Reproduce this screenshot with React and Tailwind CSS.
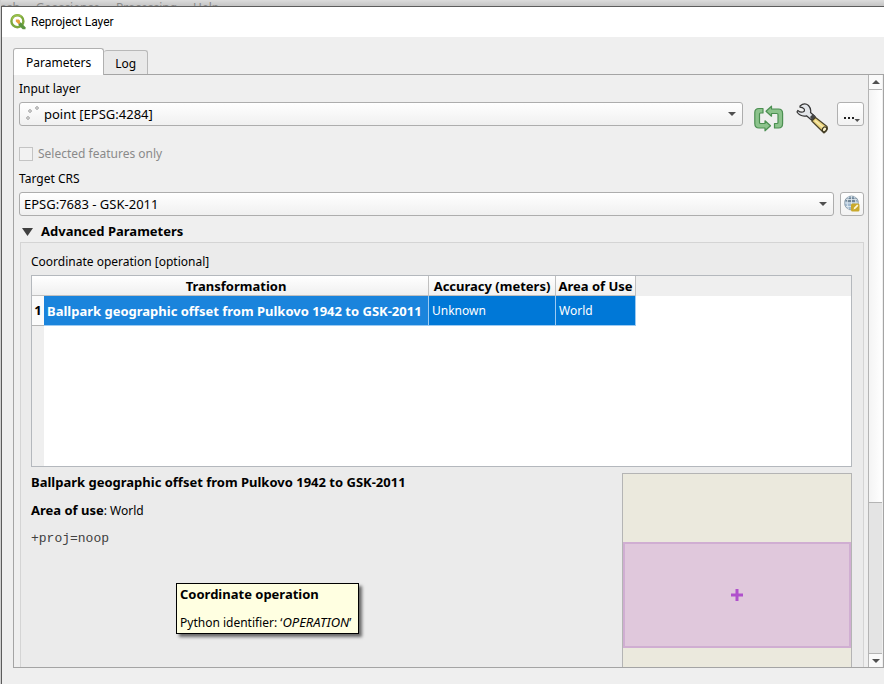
import clsx from 'clsx';

const MENUS = ['Mesh', 'Geoscience', 'Processing', 'Help'];

const LAYERS = ['point [EPSG:4284]'];
const CRS_LIST = ['EPSG:7683 - GSK-2011'];

const OPERATION = {
  name: 'Ballpark geographic offset from Pulkovo 1942 to GSK-2011',
  accuracy: 'Unknown',
  area: 'World',
  proj: '+proj=noop',
};

const QgisLogo = () => (
  <svg width="16" height="16" viewBox="0 0 16 16" aria-hidden="true">
    <circle cx="7.4" cy="7.2" r="6" fill="none" stroke="#7da83c" strokeWidth="2.4" />
    <path d="M2 5.500A5.800 5.800 0 0 1 11.500 2.600" fill="none" stroke="#9cc14a" strokeWidth="1.4" />
    <path d="M8.500 8.200l2.400.2 4.600 4.800v2.100h-2.800L8.500 11z" fill="#5b9440" />
    <path d="M5.800 5.600h3l1.200 1.200v2.600l-1.600.6-2.600-2.400z" fill="#e8a13e" />
  </svg>
);

const PointsIcon = () => (
  <svg width="16" height="16" viewBox="0 0 16 16" aria-hidden="true">
    <g fill="#fff" stroke="#8c8c8c" strokeWidth="0.9">
      <circle cx="5" cy="5" r="1.3" />
      <circle cx="12" cy="2" r="1.3" />
      <circle cx="3" cy="12" r="1.3" />
    </g>
  </svg>
);

const IterateIcon = () => (
  <svg width="30" height="28" viewBox="0 0 30 28" aria-hidden="true">
    <g fill="#8cc38c" stroke="#4b8f51" strokeWidth="1.2" strokeLinejoin="round">
      <path d="M9 3.500H5Q.8 3.500.8 7.500V18.500Q.8 23 5 23H11V25.800L16.500 20.800L11 15.800V18.500H6.500Q5.500 18.500 5.500 17.500V9Q5.500 8 6.500 8H9Z" />
      <path d="M20.500 23H24.500Q28.600 23 28.600 18.500V8.500Q28.600 4 24.500 4H17.500V1.200L12 6.200L17.500 11.200V8.500H23Q24 8.500 24 9.500V17.500Q24 18.500 23 18.500H20.500Z" />
    </g>
  </svg>
);

const WrenchIcon = () => (
  <svg width="34" height="32" viewBox="0 0 34 32" aria-hidden="true">
    <path
      d="M4 3Q8.500-.8 12.500 2.500Q15.500 6 14.500 9.500L19 13.500L15.500 17L10.500 12.800Q4.500 14 1 9L1.800 7.500Q5.500 10.500 8.200 8.200Q9.500 5 4 4.200Z"
      fill="#e3e6ea"
      stroke="#343434"
      strokeWidth="1.2"
      strokeLinejoin="round"
    />
    <path d="M14 14l3-3 3 3-3.500 3.500z" fill="#454545" />
    <path d="M19.500 14.500L31 23.500Q32.500 27 28 30L15.800 18Z" fill="#ecd57e" stroke="#4a432a" strokeWidth="1.2" strokeLinejoin="round" />
    <path d="M19 17.500l9.500 8" stroke="#f8ebb0" strokeWidth="1.5" />
    <ellipse cx="28.500" cy="26.300" rx="2" ry="2.600" transform="rotate(35 28.500 26.300)" fill="#fff6cc" stroke="#3b3620" strokeWidth="1.2" />
  </svg>
);

const GlobeIcon = () => (
  <svg width="18" height="18" viewBox="0 0 18 18" aria-hidden="true">
    <circle cx="8.500" cy="8" r="7" fill="#9fb8cf" stroke="#8d9aa5" strokeWidth="0.8" />
    <path d="M2 5Q8 0 14.500 4L12 7H4z" fill="#6f8496" />
    <path
      d="M1.500 8h14M3 4.500h11M3 11.500h11M8.500 1v14M5.500 1.500Q2.500 8 5.500 14.500M11.500 1.500Q14.500 8 11.500 14.500"
      fill="none"
      stroke="#e4edf4"
      strokeWidth="0.8"
    />
    <rect x="8" y="8.500" width="8.500" height="8" rx="1.500" fill="#c9a92c" />
    <path d="M10.500 14.500l.7-2 3-3 1.200 1.300-3 3z" fill="#fff8d8" />
  </svg>
);

const Arrow = ({ up, className }) => (
  <svg width="8" height="4" viewBox="0 0 8 4" aria-hidden="true" className={className}>
    <path d={up ? 'M0 4L4 0L8 4Z' : 'M0 0L4 4L8 0Z'} fill="#505050" />
  </svg>
);

const Combo = ({ id, options, icon }) => (
  <div className="relative min-w-0 flex-1">
    <select
      id={id}
      className={clsx(
        'block h-6 w-full appearance-none rounded-[3px] border border-[#adadad] bg-linear-to-b from-white to-[#f0f0f0] pt-0.5 pr-6 text-[13px]',
        icon ? 'pl-6' : 'pl-1',
      )}
    >
      {options.map((option) => (
        <option key={option}>{option}</option>
      ))}
    </select>
    {icon && <span className="pointer-events-none absolute top-1 left-1.5">{icon}</span>}
    <Arrow className="pointer-events-none absolute top-2.5 right-[7px]" />
  </div>
);

const ScrollBar = () => (
  <div className="flex w-[14px] shrink-0 flex-col border-l border-[#b4b4b4] bg-[#e4e4e4]">
    <button type="button" aria-label="Scroll up" className="flex h-[15px] items-center justify-center border-b border-[#b4b4b4] bg-[#fafafa]">
      <Arrow up />
    </button>
    <div className="flex-[413] border-b border-[#b4b4b4] bg-linear-to-r from-[#f4f4f4] to-white" />
    <div className="flex-[150]" />
    <button type="button" aria-label="Scroll down" className="flex h-[14px] items-center justify-center border-t border-[#b4b4b4] bg-[#fafafa]">
      <Arrow />
    </button>
  </div>
);

const headCell = 'border-r border-b border-[#c0c0c0] bg-linear-to-b from-white to-[#f0f0f0] p-0 text-center text-[13px] leading-[18px] font-bold whitespace-nowrap';
const bodyCell = 'border-r border-b border-[#9ccaf2] p-0 pl-[3px] text-left leading-[18px] whitespace-nowrap text-white';

const OperationTable = () => (
  <div className="h-48 border border-[#b4b8bd] bg-white">
    <table className="h-full w-full table-fixed border-separate border-spacing-0">
      <colgroup>
        <col className="w-3" />
        <col className="w-[385px]" />
        <col className="w-[127px]" />
        <col className="w-20" />
        <col />
      </colgroup>
      <thead>
        <tr className="h-5">
          <td className="border-b border-[#c0c0c0] bg-linear-to-b from-white to-[#f0f0f0] p-0" />
          <th scope="col" className={headCell}>Transformation</th>
          <th scope="col" className={headCell}>Accuracy (meters)</th>
          <th scope="col" className={headCell}>Area of Use</th>
          <td className="bg-[#efefef] p-0" />
        </tr>
      </thead>
      <tbody>
        <tr className="h-[30px]">
          <th scope="row" className="border-b border-[#b4b4b4] bg-[#fbfbfb] p-0 text-center text-[13px] font-bold">1</th>
          <td className={clsx(bodyCell, 'bg-[#1a84dc] text-[13px] font-bold')}>{OPERATION.name}</td>
          <td className={clsx(bodyCell, 'bg-[#0078d7]')}>{OPERATION.accuracy}</td>
          <td className={clsx(bodyCell, 'bg-[#0078d7]')}>{OPERATION.area}</td>
          <td className="p-0" />
        </tr>
        <tr>
          <td className="bg-[#efefef] p-0" />
          <td colSpan={4} className="p-0" />
        </tr>
      </tbody>
    </table>
  </div>
);

const AreaPreview = () => (
  <div className="flex h-[243px] w-[230px] shrink-0 flex-col justify-center border border-[#b4b4b4] bg-[#ebe9dd]">
    <div className="flex h-[106px] items-center justify-center border-2 border-[#d0aed2] bg-[#e0c8dc]">
      <svg width="12" height="12" viewBox="0 0 12 12" aria-hidden="true">
        <path d="M6 0V12M0 6H12" stroke="#b050cc" strokeWidth="3" />
      </svg>
    </div>
  </div>
);

const Tooltip = () => (
  <div
    role="tooltip"
    className="absolute top-[110px] left-[145px] w-[183px] border border-black bg-[#ffffe1] px-[3px] whitespace-nowrap shadow-[3px_3px_3px_rgba(0,0,0,0.55)]"
  >
    <p className="text-[13px] leading-5 font-bold">Coordinate operation</p>
    <p className="mt-2 leading-5">
      Python identifier: ‘<i className="text-[13px]">OPERATION</i>’
    </p>
  </div>
);

const AdvancedParameters = () => (
  <section>
    <button type="button" className="mt-1.5 flex h-5 items-center gap-2 pl-[3px] text-[13px] font-bold">
      <svg width="11" height="8" viewBox="0 0 11 8" aria-hidden="true">
        <path d="M0 0H11L5.500 8Z" fill="#404040" />
      </svg>
      Advanced Parameters
    </button>
    <div className="ml-px border border-[#d4d4d4] bg-[#ebebeb] pt-[9px] pr-[11px] pb-5 pl-2.5">
      <p className="mb-[3px] leading-5">Coordinate operation [optional]</p>
      <OperationTable />
      <div className="relative mt-1.5 flex justify-between">
        <div className="flex flex-col gap-2.5 leading-[18px]">
          <p className="text-[13px] leading-[18px] font-bold">{OPERATION.name}</p>
          <p>
            <b className="text-[13px]">Area of use</b>: {OPERATION.area}
          </p>
          <p className="font-['Liberation_Mono',monospace] text-[13px] leading-[18px] text-[#404040]">{OPERATION.proj}</p>
        </div>
        <AreaPreview />
        <Tooltip />
      </div>
    </div>
  </section>
);

const ParametersForm = () => (
  <form className="min-w-0 flex-1 overflow-hidden pt-1 pr-1 pl-[5px]">
    <label htmlFor="input-layer" className="mb-[3px] block leading-5">Input layer</label>
    <div className="flex h-8 items-start">
      <Combo id="input-layer" options={LAYERS} icon={<PointsIcon />} />
      <button type="button" aria-label="Iterate over this layer" className="ml-[11px] pt-[3px]">
        <IterateIcon />
      </button>
      <button type="button" aria-label="Advanced options" className="ml-3 pt-px">
        <WrenchIcon />
      </button>
      <button
        type="button"
        aria-label="Browse"
        className="ml-[7px] flex h-6 w-[27px] items-end justify-center rounded-[3px] border border-[#b0b0b0] bg-linear-to-b from-white to-[#f2f2f2] pb-[3px]"
      >
        <svg width="18" height="8" viewBox="0 0 18 8" aria-hidden="true">
          <path d="M2 3h2v2H2zM6 3h2v2H6zM10 3h2v2h-2z" fill="#202020" />
          <path d="M12.500 5H18L15.200 8Z" fill="#505050" />
        </svg>
      </button>
    </div>

    <div className="mt-2.5 flex h-5 items-center gap-[5px] text-[#8a8a8a]">
      <input
        id="selected-only"
        type="checkbox"
        disabled
        className="size-[14px] appearance-none border border-[#c4c4c4] bg-[#f2f2f2]"
      />
      <label htmlFor="selected-only">Selected features only</label>
    </div>

    <label htmlFor="target-crs" className="mt-[5px] mb-[3px] block leading-5">Target CRS</label>
    <div className="flex gap-1.5">
      <Combo id="target-crs" options={CRS_LIST} />
      <button
        type="button"
        aria-label="Select CRS"
        className="flex size-6 items-center justify-center rounded-[3px] border border-[#b0b0b0] bg-linear-to-b from-white to-[#f2f2f2]"
      >
        <GlobeIcon />
      </button>
    </div>

    <AdvancedParameters />
  </form>
);

const App = () => {
  return (
    <div className="flex h-screen flex-col overflow-hidden bg-[#cfcfcf] pl-px font-['Noto_Sans',sans-serif] text-xs text-black">
      <nav className="flex h-1.5 shrink-0 items-start gap-4 overflow-hidden bg-linear-to-b from-[#dcdcdc] to-[#c4c4c4] text-[#8a8a8a]">
        {MENUS.map((menu) => (
          <span key={menu} className="leading-4 first:-ml-3">{menu}</span>
        ))}
      </nav>

      <div className="flex min-h-0 flex-1 flex-col border-t border-l border-[#5c5c5c] bg-[#efefef]">
        <header className="flex h-[30px] shrink-0 items-center gap-[5px] bg-white pl-2 font-['Roboto',sans-serif]">
          <QgisLogo />
          <h1>Reproject Layer</h1>
        </header>

        <div className="flex min-h-0 flex-1 flex-col pt-[11px] pb-4 pl-[11px]">
          <div role="tablist" className="flex shrink-0 items-end">
            <button
              type="button"
              role="tab"
              aria-selected="true"
              className="relative -mb-px h-[27px] rounded-t-[3px] border border-b-0 border-[#b0b0b0] bg-white px-3 pt-0.5"
            >
              Parameters
            </button>
            <button
              type="button"
              role="tab"
              aria-selected="false"
              className="h-6 rounded-t-[3px] border border-b-0 border-l-0 border-[#b8b8b8] bg-[#e9e9e9] px-[11px] pt-0.5"
            >
              Log
            </button>
          </div>
          <div role="tabpanel" className="flex min-h-0 flex-1 border border-[#a4a4a4] pr-px">
            <ParametersForm />
            <ScrollBar />
          </div>
        </div>
      </div>
    </div>
  );
};

export default App;
